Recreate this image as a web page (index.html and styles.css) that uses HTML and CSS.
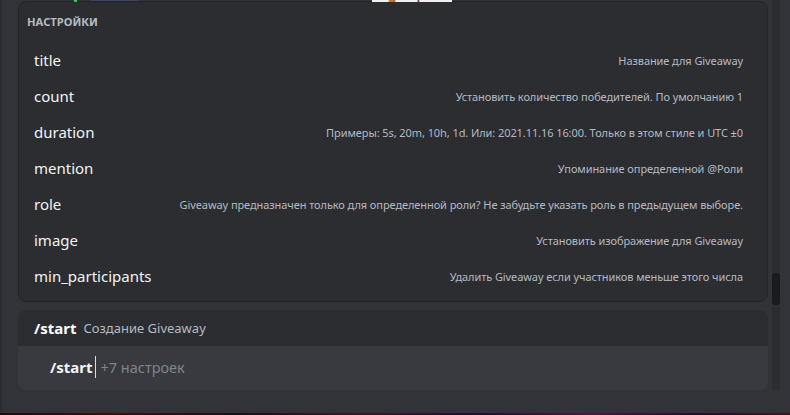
FILE: index.html
```html
<!DOCTYPE html>
<html lang="ru">
<head>
<meta charset="utf-8">
<title>Настройки</title>
<link rel="stylesheet" href="styles.css">
</head>
<body>
<div class="frame">
  <div class="edge"></div>
  <div class="main">
    <section class="options">
      <h2 class="options-title">Настройки</h2>
      <ul class="option-list">
        <li class="option"><span class="opt-name">title</span><span class="opt-desc">Название для Giveaway</span></li>
        <li class="option"><span class="opt-name">count</span><span class="opt-desc">Установить количество победителей. По умолчанию 1</span></li>
        <li class="option"><span class="opt-name">duration</span><span class="opt-desc">Примеры: 5s, 20m, 10h, 1d. Или: 2021.11.16 16:00. Только в этом стиле и UTC ±0</span></li>
        <li class="option"><span class="opt-name">mention</span><span class="opt-desc">Упоминание определенной @Роли</span></li>
        <li class="option"><span class="opt-name">role</span><span class="opt-desc">Giveaway предназначен только для определенной роли? Не забудьте указать роль в предыдущем выборе.</span></li>
        <li class="option"><span class="opt-name">image</span><span class="opt-desc">Установить изображение для Giveaway</span></li>
        <li class="option"><span class="opt-name">min_participants</span><span class="opt-desc">Удалить Giveaway если участников меньше этого числа</span></li>
      </ul>
    </section>
    <section class="composer">
      <div class="cmd-head"><span class="cmd-name">/start</span><span class="cmd-desc">Создание Giveaway</span></div>
      <div class="cmd-input"><span class="cmd-typed">/start</span><span class="caret"></span><span class="cmd-hint">+7 настроек</span></div>
    </section>
  </div>
  <div class="scroll-track"><div class="scroll-thumb"></div></div>
</div>
<div class="wallpaper"></div>
<div class="peek peek-green"></div>
<div class="peek peek-blue"></div>
<div class="peek peek-img"></div>
</body>
</html>
```
FILE: styles.css
```css
html, body {
  margin: 0;
  padding: 0;
}
body {
  width: 790px;
  height: 415px;
  overflow: hidden;
  background: #313338;
  font-family: "Noto Sans", "Open Sans", sans-serif;
  position: relative;
}
.frame {
  display: flex;
  height: 413px;
}
.edge {
  width: 2px;
  background: #2b2d31;
  margin-right: 16px;
}
.main {
  width: 750px;
  padding-top: 1px;
  display: flex;
  flex-direction: column;
}
.options {
  background: #2b2d31;
  border: 1px solid #232428;
  border-radius: 8px;
  height: 301px;
  box-sizing: border-box;
}
.options-title {
  margin: 0;
  padding: 12px 0 0 8px;
  height: 40px;
  box-sizing: border-box;
  font-size: 11.2px;
  font-weight: 700;
  text-transform: uppercase;
  color: #b5bac1;
  line-height: 16px;
}
.option-list {
  list-style: none;
  margin: 0;
  padding: 0;
}
.option {
  height: 36px;
  display: flex;
  align-items: center;
  justify-content: space-between;
  padding: 0 24px 0 15px;
}
.opt-name {
  font-size: 15px;
  color: #f2f3f5;
}
.opt-desc {
  font-size: 11px;
  letter-spacing: -0.08px;
  color: #b5bac1;
}
.composer {
  margin-top: 8px;
  border-radius: 8px;
  overflow: hidden;
}
.cmd-head {
  height: 36px;
  background: #2b2d31;
  display: flex;
  align-items: center;
  padding-left: 16px;
  gap: 7px;
}
.cmd-name {
  font-size: 15px;
  font-weight: 700;
  color: #ffffff;
}
.cmd-desc {
  font-size: 13px;
  color: #b5bac1;
}
.cmd-input {
  height: 44px;
  box-sizing: border-box;
  padding-bottom: 2px;
  background: #383a40;
  display: flex;
  align-items: center;
  padding-left: 32px;
}
.cmd-typed {
  font-size: 15px;
  font-weight: 700;
  color: #f2f3f5;
}
.caret {
  width: 1px;
  height: 22px;
  background: #dbdee1;
  margin: 0 4px 0 3px;
}
.cmd-hint {
  font-size: 14.5px;
  color: #80848e;
}
.scroll-track {
  width: 8px;
  margin-left: 4px;
  background: #2b2d31;
  position: relative;
  height: 390px;
}
.scroll-thumb {
  position: absolute;
  left: 0;
  top: 273px;
  width: 8px;
  height: 32px;
  border-radius: 4px;
  background: #1a1b1e;
}
.wallpaper {
  height: 2px;
  background: linear-gradient(90deg, #1a0c10 0%, #3a1014 15%, #14101a 30%, #3a1a24 45%, #1c1030 60%, #4a1a3c 75%, #20102a 88%, #3a1822 100%);
}
.peek {
  position: absolute;
  top: 0;
}
.peek-green {
  left: 74px;
  width: 3px;
  height: 2px;
  background: #23d160;
}
.peek-blue {
  left: 91px;
  width: 48px;
  height: 1px;
  background: #3b4170;
}
.peek-img {
  left: 372px;
  width: 80px;
  height: 2px;
  background: linear-gradient(90deg, #f0f0f0 0%, #f0f0f0 20%, #d07a2a 22%, #c86a20 28%, #f0f0f0 30%, #f0f0f0 56%, #5a4a3a 58%, #f0f0f0 60%, #f0f0f0 100%);
}
```
